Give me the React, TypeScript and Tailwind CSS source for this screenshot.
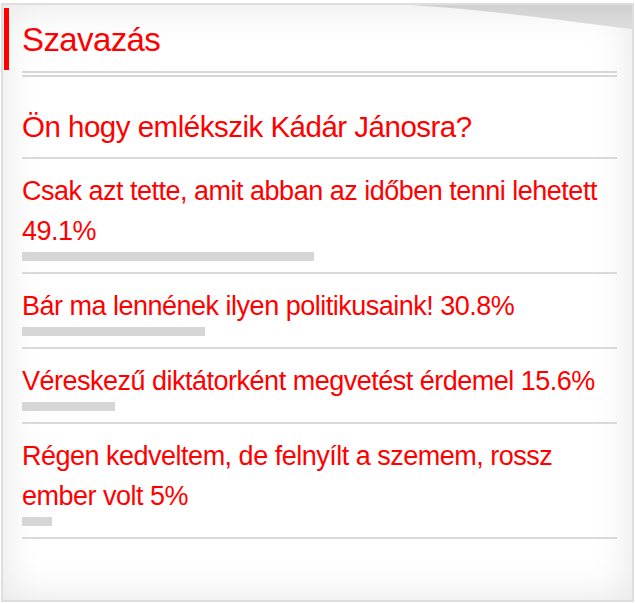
const question = "Ön hogy emlékszik Kádár Jánosra?";

const answers = [
  { label: "Csak azt tette, amit abban az időben tenni lehetett", percent: 49.1 },
  { label: "Bár ma lennének ilyen politikusaink!", percent: 30.8 },
  { label: "Véreskezű diktátorként megvetést érdemel", percent: 15.6 },
  { label: "Régen kedveltem, de felnyílt a szemem, rossz ember volt", percent: 5 },
];

function App() {
  return (
    <div className="min-h-screen w-full bg-white pl-[1px] pt-[3px] font-['Liberation_Sans',Arial,sans-serif]">
      <div className="relative w-[633px] h-[599px] border-2 border-[#dedede] bg-white shadow-[inset_0_0_40px_rgba(0,0,0,0.11)] overflow-hidden">
        {/* curled corner in the top right */}
        <svg className="absolute right-0 top-0" width="220" height="40" viewBox="0 0 220 40">
          <defs>
            <linearGradient id="curl" x1="0" y1="0" x2="0" y2="1">
              <stop offset="0" stopColor="#d0d0d0" />
              <stop offset="1" stopColor="#dddddd" />
            </linearGradient>
          </defs>
          <path d="M0 0 L220 0 L220 24 C160 17 90 6 0 0 Z" fill="url(#curl)" />
        </svg>

        <div className="relative flex flex-col">
          <div className="ml-[1px] mt-[3px] h-[62px] border-l-[5px] border-[#ff0000] pl-[13px] flex items-center">
            <h2 className="text-[33px] leading-[38px] tracking-[-0.6px] text-[#ff0000] pt-[2px]">Szavazás</h2>
          </div>

          <div className="ml-[19px] mr-[15px]">
            <div className="mt-[1px] h-[6px] border-y-2 border-[#d6d6d6]" />

            <div className="pt-[30px] pb-[10px] text-[29.5px] leading-[40px] tracking-[-0.5px] text-[#ff0000]">
              {question}
            </div>

            {answers.map((a) => (
              <div key={a.label} className="border-t-2 border-[#dadada] pt-[12px] pb-[11px]">
                <div className="text-[27px] leading-[40px] tracking-[-0.5px] text-[#ff0000]">
                  {a.label} {a.percent}%
                </div>
                <div className="mt-[1px] h-[9px] bg-[#d6d6d6]" style={{ width: `${a.percent}%` }} />
              </div>
            ))}
            <div className="border-t-2 border-[#dadada]" />
          </div>
        </div>
      </div>
    </div>
  );
}

export default App;
